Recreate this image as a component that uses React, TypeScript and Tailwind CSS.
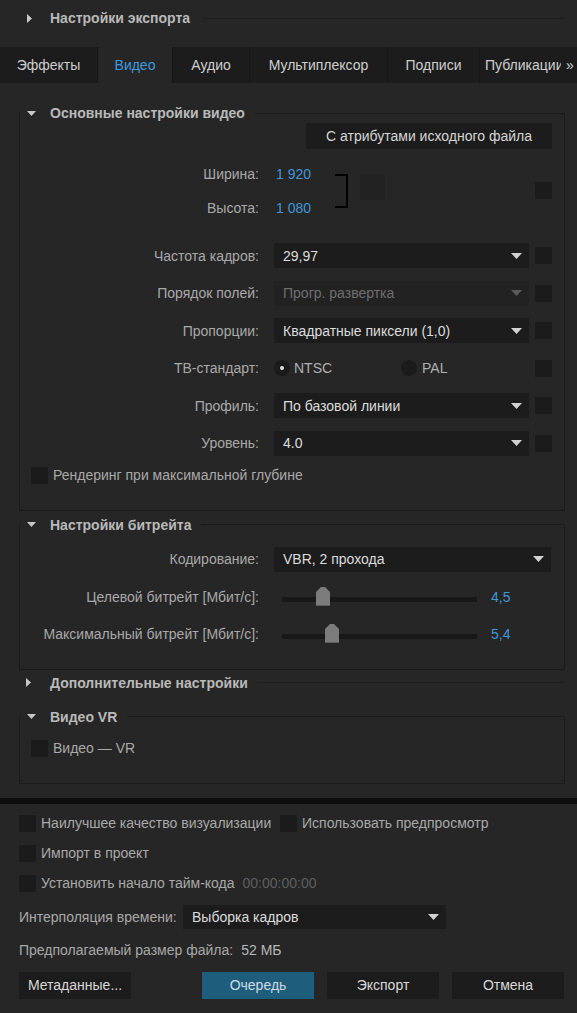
import React from "react";

const Tri = ({ dir }: { dir: "down" | "right" }) =>
  dir === "down" ? (
    <svg width="9" height="5" viewBox="0 0 9 5" className="shrink-0">
      <path d="M0 0H9L4.5 5Z" fill="#c8c8c8" />
    </svg>
  ) : (
    <svg width="5" height="9" viewBox="0 0 5 9" className="shrink-0">
      <path d="M0 0L5 4.5L0 9Z" fill="#c8c8c8" />
    </svg>
  );

const Arrow = ({ disabled }: { disabled?: boolean }) => (
  <svg width="11" height="6" viewBox="0 0 11 6" className="shrink-0">
    <path d="M0 0H11L5.5 6Z" fill={disabled ? "#5a5a5a" : "#d2d2d2"} />
  </svg>
);

const Check = () => <div className="w-[17px] h-[17px] bg-[#1b1b1b] shrink-0" />;

function Dropdown({ value, w, disabled }: { value: string; w: string; disabled?: boolean }) {
  return (
    <div
      className={`${w} h-[25px] flex items-center justify-between pl-[9px] pr-[7px] shrink-0 ${
        disabled ? "bg-[#222222] text-[#6f6f6f]" : "bg-[#1c1c1c] text-[#dcdcdc]"
      }`}
    >
      <span>{value}</span>
      <Arrow disabled={disabled} />
    </div>
  );
}

function Row({ label, children }: { label: string; children: React.ReactNode }) {
  return (
    <div className="flex items-center h-[25px]">
      <div className="w-[239px] text-right text-[#a9a9a9] shrink-0 whitespace-nowrap">{label}</div>
      <div className="ml-[15px] flex items-center">{children}</div>
    </div>
  );
}

function Section({ title, children, className }: { title: string; children: React.ReactNode; className: string }) {
  return (
    <fieldset className={`ml-[19px] w-[546px] border border-[#1b1b1b] ${className}`}>
      <legend className="p-0">
        <div className="flex items-center h-[20px] pl-[7px] pr-[10px]">
          <Tri dir="down" />
          <span className="ml-[14px] font-bold text-[#b9b9b9]">{title}</span>
        </div>
      </legend>
      {children}
    </fieldset>
  );
}

function Slider({ label, pos, value }: { label: string; pos: string; value: string }) {
  return (
    <div className="flex items-center h-[20px]">
      <div className="w-[239px] text-right text-[#a9a9a9] shrink-0 whitespace-nowrap">{label}</div>
      <div className="ml-[23px] mt-[5px] w-[195px] h-[5px] bg-[#181818] relative">
        <svg width="14" height="19" viewBox="0 0 14 19" className={`absolute top-[-10px] ${pos}`}>
          <path d="M5 0H9L14 5V19H0V5Z" fill="#7c7c7c" />
          <rect x="0" y="18" width="14" height="1" fill="#5f5f5f" />
        </svg>
      </div>
      <div className="ml-[14px] text-[#3f98d8]">{value}</div>
    </div>
  );
}

const tabs = [
  { t: "Эффекты", w: "w-[98px]" },
  { t: "Видео", w: "w-[75px]", active: true },
  { t: "Аудио", w: "w-[77px]" },
  { t: "Мультиплексор", w: "w-[138px]" },
  { t: "Подписи", w: "w-[92px]" },
];

export default function App() {
  return (
    <div
      className="w-[577px] h-[1013px] overflow-hidden bg-[#262626] text-[14px] leading-[20px] text-[#a9a9a9]"
      style={{ fontFamily: '"Liberation Sans", Arial, sans-serif' }}
    >
      {/* header */}
      <div className="h-[36px] flex items-center pl-[27px]">
        <Tri dir="right" />
        <span className="ml-[18px] font-bold text-[#b9b9b9]">Настройки экспорта</span>
        <div className="flex-1 h-px bg-[#1f1f1f] ml-[12px] mr-[12px]" />
      </div>

      {/* tabs */}
      <div className="mt-[11px] h-[36px] bg-[#1c1c1c] flex">
        {tabs.map((tab) => (
          <div
            key={tab.t}
            className={`${tab.w} h-full flex items-center justify-center border-r border-[#161616] shrink-0 ${
              tab.active ? "bg-[#262626] text-[#3f9be0]" : "text-[#cfcfcf]"
            }`}
          >
            {tab.t}
          </div>
        ))}
        <div className="w-[81px] h-full flex items-center pl-[5px] overflow-hidden whitespace-nowrap text-[#cfcfcf] shrink-0">
          Публикации
        </div>
        <div className="flex-1 h-full flex items-center pl-[5px] text-[#cfcfcf]">»</div>
      </div>

      {/* basic video settings */}
      <Section title="Основные настройки видео" className="mt-[20px] pb-[26px]">
        <div className="flex justify-end pr-[12px]">
          <div className="w-[246px] h-[26px] bg-[#1c1c1c] flex items-center justify-center text-[#d6d6d6]">
            С атрибутами исходного файла
          </div>
        </div>

        <div className="mt-[15px] flex items-start h-[54px]">
          <div className="w-[239px] flex flex-col gap-[14px] text-right shrink-0">
            <div>Ширина:</div>
            <div>Высота:</div>
          </div>
          <div className="ml-[17px] w-[59px] flex flex-col gap-[14px] text-[#3f98d8] shrink-0">
            <div>1 920</div>
            <div>1 080</div>
          </div>
          <div className="mt-[10px] w-[13px] h-[34px] border-2 border-l-0 border-black shrink-0" />
          <div className="ml-[12px] mt-[11px] w-[25px] h-[25px] bg-[#222222] shrink-0" />
          <div className="flex-1" />
          <div className="mt-[18px] mr-[12px]">
            <Check />
          </div>
        </div>

        <div className="mt-[25px] flex flex-col gap-[12.5px]">
          <Row label="Частота кадров:">
            <Dropdown value="29,97" w="w-[255px]" />
            <div className="ml-[6px]">
              <Check />
            </div>
          </Row>
          <Row label="Порядок полей:">
            <Dropdown value="Прогр. развертка" w="w-[255px]" disabled />
            <div className="ml-[6px]">
              <Check />
            </div>
          </Row>
          <Row label="Пропорции:">
            <Dropdown value="Квадратные пиксели (1,0)" w="w-[255px]" />
            <div className="ml-[6px]">
              <Check />
            </div>
          </Row>
          <Row label="ТВ-стандарт:">
            <div className="w-[255px] flex items-center">
              <div className="w-[127px] flex items-center">
                <div className="w-[16px] h-[16px] rounded-full bg-[#1b1b1b] flex items-center justify-center">
                  <div className="w-[4px] h-[4px] rounded-full bg-[#e0e0e0]" />
                </div>
                <span className="ml-[4px] text-[#b0b0b0]">NTSC</span>
              </div>
              <div className="w-[16px] h-[16px] rounded-full bg-[#1b1b1b]" />
              <span className="ml-[5px] text-[#b0b0b0]">PAL</span>
            </div>
            <div className="ml-[6px]">
              <Check />
            </div>
          </Row>
          <Row label="Профиль:">
            <Dropdown value="По базовой линии" w="w-[255px]" />
            <div className="ml-[6px]">
              <Check />
            </div>
          </Row>
          <Row label="Уровень:">
            <Dropdown value="4.0" w="w-[255px]" />
            <div className="ml-[6px]">
              <Check />
            </div>
          </Row>
        </div>

        <div className="mt-[11px] flex items-center h-[17px] pl-[11px]">
          <Check />
          <span className="ml-[5px]">Рендеринг при максимальной глубине</span>
        </div>
      </Section>

      {/* bitrate */}
      <Section title="Настройки битрейта" className="mt-[4px] pb-[25px]">
        <div className="mt-[12px]">
          <Row label="Кодирование:">
            <Dropdown value="VBR, 2 прохода" w="w-[277px]" />
          </Row>
        </div>
        <div className="mt-[15px]">
          <Slider label="Целевой битрейт [Мбит/с]:" pos="left-[34px]" value="4,5" />
        </div>
        <div className="mt-[17px]">
          <Slider label="Максимальный битрейт [Мбит/с]:" pos="left-[43px]" value="5,4" />
        </div>
      </Section>

      {/* additional */}
      <div className="mt-[3px] h-[20px] flex items-center pl-[26px]">
        <Tri dir="right" />
        <span className="ml-[19px] font-bold text-[#b9b9b9]">Дополнительные настройки</span>
        <div className="flex-1 h-px bg-[#1f1f1f] ml-[9px] mr-[12px]" />
      </div>

      {/* VR */}
      <Section title="Видео VR" className="mt-[14px] pb-[26px]">
        <div className="mt-[13px] flex items-center h-[17px] pl-[11px]">
          <Check />
          <span className="ml-[5px]">Видео — VR</span>
        </div>
      </Section>

      <div className="mt-[14px] h-[6px] bg-[#0d0d0d]" />

      {/* bottom */}
      <div className="pl-[19px]">
        <div className="mt-[11px] flex items-center h-[17px]">
          <Check />
          <span className="ml-[5px] w-[239px] whitespace-nowrap">Наилучшее качество визуализации</span>
          <Check />
          <span className="ml-[5px] whitespace-nowrap">Использовать предпросмотр</span>
        </div>
        <div className="mt-[13px] flex items-center h-[17px]">
          <Check />
          <span className="ml-[5px]">Импорт в проект</span>
        </div>
        <div className="mt-[13px] flex items-center h-[17px]">
          <Check />
          <span className="ml-[5px]">Установить начало тайм-кода</span>
          <span className="ml-[8px] text-[#5f5f5f]">00:00:00:00</span>
        </div>
        <div className="mt-[13px] flex items-center h-[24px]">
          <div className="w-[164px] whitespace-nowrap">Интерполяция времени:</div>
          <div className="w-[263px] h-[24px] bg-[#1c1c1c] flex items-center justify-between pl-[9px] pr-[7px] text-[#dcdcdc]">
            <span>Выборка кадров</span>
            <Arrow />
          </div>
        </div>
        <div className="mt-[11px] h-[20px] flex items-center">
          <span>Предполагаемый размер файла:</span>
          <span className="ml-[8px] text-[#b8b8b8]">52 МБ</span>
        </div>
      </div>
      <div className="mt-[12px] flex h-[27px]">
        <div className="ml-[19px] w-[112px] bg-[#1c1c1c] flex items-center justify-center text-[#d8d8d8]">
          Метаданные...
        </div>
        <div className="ml-[71px] w-[112px] bg-[#1f5d7d] flex items-center justify-center text-[#cfdbe2]">
          Очередь
        </div>
        <div className="ml-[13px] w-[112px] bg-[#1c1c1c] flex items-center justify-center text-[#d8d8d8]">
          Экспорт
        </div>
        <div className="ml-[13px] w-[112px] bg-[#1c1c1c] flex items-center justify-center text-[#d8d8d8]">
          Отмена
        </div>
      </div>
    </div>
  );
}
